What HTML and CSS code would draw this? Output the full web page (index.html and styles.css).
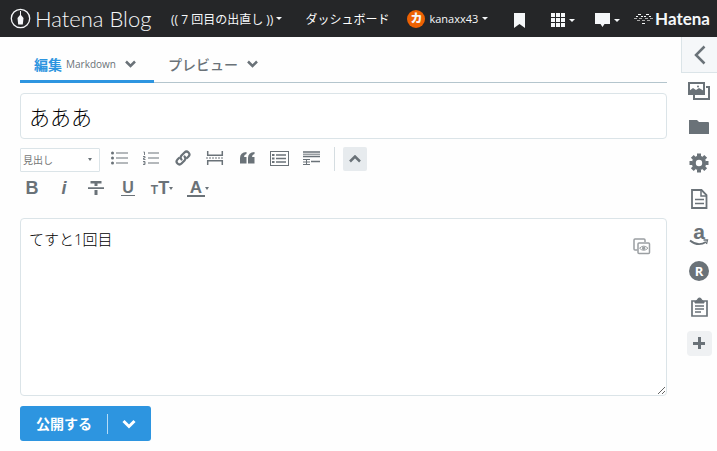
FILE: index.html
```
<!DOCTYPE html>
<html lang="ja">
<head>
    <meta charset="UTF-8">
    <meta name="viewport" content="width=device-width, initial-scale=1.0">
    <title>記事の編集 - Hatena Blog</title>
    <link rel="stylesheet" href="styles.css">
</head>
<body>
    <header class="global-header">
        <a href="#" class="blog-logo">
            <svg width="21" height="21" viewBox="0 0 21 21">
                <circle cx="10.5" cy="10.5" r="9.2" fill="none" stroke="#f5f7f9" stroke-width="1.3"/>
                <path d="M10 3h1v4l2.500 3-.7 6.500H8.200L7.500 10 10 7z" fill="#f5f7f9"/>
            </svg>
            <span>Hatena Blog</span>
        </a>
        <nav class="header-nav">
            <a href="#" class="blog-name">(( 7 回目の出直し ))<span class="caret"></span></a>
            <a href="#" class="dashboard">ダッシュボード</a>
            <a href="#" class="user"><span class="avatar">カ</span><span class="user-name">kanaxx43</span><span class="caret"></span></a>
        </nav>
        <nav class="header-icons">
            <a href="#" aria-label="ブックマーク">
                <svg width="12" height="15" viewBox="0 0 12 15"><path d="M0 0h11v15l-5.500-4L0 15z" fill="#f5f7f9"/></svg>
            </a>
            <a href="#" aria-label="サービス一覧">
                <svg width="14" height="14" viewBox="0 0 14 14"><path d="M0 0h4v4H0zM5 0h4v4H5zM10 0h4v4h-4zM0 5h4v4H0zM5 5h4v4H5zM10 5h4v4h-4zM0 10h4v4H0zM5 10h4v4H5zM10 10h4v4h-4z" fill="#f5f7f9"/></svg>
                <span class="caret"></span>
            </a>
            <a href="#" aria-label="お知らせ">
                <svg width="15" height="14" viewBox="0 0 15 14"><path d="M0 0h15v11H9.500L7.500 14l-2-3H0z" fill="#f5f7f9"/></svg>
                <span class="caret"></span>
            </a>
        </nav>
        <a href="#" class="hatena-logo">
            <svg width="19" height="12" viewBox="0 0 19 12" fill="none" stroke="#f5f7f9" stroke-width="1">
                <path d="M4 1.500h3M12 1.500h3M2 3.500h2M7 3.500h2M10 3.500h2M15 3.500h2"/>
                <path d="M0 5.500h3M5 5.500h3M11 5.500h3M16 5.500h3M3 7.500h3M8 7.500h3M13 7.500h3" stroke="#aaa"/>
                <path d="M8 10.500h3"/>
            </svg>
            <span>Hatena</span>
        </a>
    </header>

    <div class="container">
        <main class="editor">
            <div class="tabs">
                <button type="button" class="tab active">編集 <small>Markdown</small>
                    <svg width="11" height="8" viewBox="0 0 11 8"><path d="M1 1.500l4.500 4.500L10 1.500" fill="none" stroke="#6a7278" stroke-width="2.500"/></svg>
                </button>
                <button type="button" class="tab">プレビュー
                    <svg width="11" height="8" viewBox="0 0 11 8"><path d="M1 1.500l4.500 4.500L10 1.500" fill="none" stroke="#6a7278" stroke-width="2.500"/></svg>
                </button>
            </div>

            <input type="text" class="title-input" value="あああ" aria-label="タイトル">

            <div class="toolbar">
                <div class="toolbar-row">
                    <div class="heading-select">
                        <select aria-label="見出し"><option>見出し</option></select>
                        <span class="caret"></span>
                    </div>
                    <div class="tool-group">
                        <button type="button" aria-label="リスト">
                            <svg width="17" height="14" viewBox="0 0 17 14"><path d="M5 2h12M5 7h12M5 12h12" stroke="#6a7278" stroke-width="1.200"/><g fill="#6a7278"><circle cx="1.500" cy="2" r="1.500"/><circle cx="1.500" cy="7" r="1.500"/><circle cx="1.500" cy="12" r="1.500"/></g></svg>
                        </button>
                        <button type="button" aria-label="番号付きリスト">
                            <svg width="16" height="14" viewBox="0 0 16 14" fill="none" stroke="#6a7278"><path d="M5 2h11M5 7h11M5 12h11" stroke-width="1.200"/><path d="M.5 1h1v3M0 5.500h2v1.500H.5v1.500H2.500M0 10.500h2v3H0M.5 12h1.500" stroke-width=".9"/></svg>
                        </button>
                        <button type="button" aria-label="リンク">
                            <svg width="16" height="16" viewBox="0 0 16 16" fill="none" stroke="#6a7278" stroke-width="2.200" stroke-linecap="round"><path d="M6.500 9.500a3 3 0 0 1 0-4l3-3a2.800 2.800 0 0 1 4 4L12 8"/><path d="M9.500 6.500a3 3 0 0 1 0 4l-3 3a2.800 2.800 0 0 1-4-4L4 8"/></svg>
                        </button>
                        <button type="button" aria-label="続きを読む">
                            <svg width="18" height="14" viewBox="0 0 18 14" fill="none" stroke="#6a7278" stroke-width="1.500"><path d="M1.700 0v4.200h14.600V0M1.700 14V9.800h14.600V14"/><path d="M0 7h18" stroke-width="1.200" stroke-dasharray="2 1"/></svg>
                        </button>
                        <button type="button" aria-label="引用">
                            <svg width="15" height="12" viewBox="0 0 15 12" fill="#6a7278"><path d="M6.500 0v2Q4 2.500 4 5h2.500v6.500H0V6Q0 .5 6.500 0zM14.500 0v2Q12 2.500 12 5h2.500v6.500H8V6q0-5.500 6.500-6z"/></svg>
                        </button>
                        <button type="button" aria-label="目次">
                            <svg width="19" height="15" viewBox="0 0 19 15" fill="none" stroke="#6a7278"><rect x=".5" y=".5" width="18" height="14"/><path d="M6 4h10M6 7.500h10M6 11h10" stroke-width="1.400"/><path d="M2 4h2.500M2 7.500h2.500M2 11h2.500" stroke-width="2"/></svg>
                        </button>
                        <button type="button" aria-label="脚注">
                            <svg width="17" height="15" viewBox="0 0 17 15" fill="none" stroke="#6a7278"><path d="M0 1h17M0 5.500h17M8 10.500h9" stroke-width="1.400"/><path d="M0 3.200h17M0 8.500h7M0 11h7M0 13.500h7M3.500 8v6"/></svg>
                        </button>
                    </div>
                    <button type="button" class="collapse" aria-label="折りたたむ">
                        <svg width="12" height="8" viewBox="0 0 12 8"><path d="M1 6.500l5-5 5 5" fill="none" stroke="#6a7278" stroke-width="2.500"/></svg>
                    </button>
                </div>
                <div class="toolbar-row text-tools">
                    <button type="button"><b>B</b></button>
                    <button type="button"><i>i</i></button>
                    <button type="button" aria-label="打ち消し線">
                        <svg width="16" height="14" viewBox="0 0 16 14" fill="#6a7278"><path d="M2.500 0h11v2.500h-4V5h-3V2.500h-4zM6.500 9h3v5h-3zM0 6.200h16v1.800H0z"/></svg>
                    </button>
                    <button type="button"><span class="underline">U</span></button>
                    <button type="button" class="with-caret"><span class="small-t">T</span>T<span class="caret"></span></button>
                    <button type="button" class="with-caret"><span class="color-a">A</span><span class="caret"></span></button>
                </div>
            </div>

            <div class="body-wrap">
                <textarea class="body-input" aria-label="本文">てすと1回目</textarea>
                <button type="button" class="preview-button" aria-label="リアルタイムプレビュー">
                    <svg width="18" height="18" viewBox="0 0 18 18" fill="none" stroke="#9b9fa2" stroke-width="1.500"><path d="M4.500 12H2a1 1 0 0 1-1-1V2a1 1 0 0 1 1-1h9a1 1 0 0 1 1 1v2"/><rect x="5" y="5" width="11.500" height="10.500" rx="1"/><path d="M6.500 10.200q4.200-4.200 8.500 0q-4.300 4.200-8.500 0z" stroke-width="1"/><circle cx="10.700" cy="10.200" r="1" fill="#9b9fa2"/></svg>
                </button>
            </div>

            <div class="publish">
                <button type="button" class="publish-main">公開する</button>
                <button type="button" class="publish-menu" aria-label="公開オプション">
                    <svg width="14" height="10" viewBox="0 0 14 10"><path d="M1.500 2L7 7.500 12.500 2" fill="none" stroke="#fff" stroke-width="3"/></svg>
                </button>
            </div>
        </main>

        <aside class="sidebar">
            <button type="button" class="sidebar-toggle" aria-label="サイドバーを開く">
                <svg width="12" height="20" viewBox="0 0 12 20"><path d="M10.500 1.500L2 10l8.500 8.500" fill="none" stroke="#6a7278" stroke-width="2.500"/></svg>
            </button>
            <button type="button" aria-label="写真を投稿">
                <svg width="22" height="18" viewBox="0 0 22 18"><path d="M6 13v4h15V5h-3" fill="none" stroke="#6a7278" stroke-width="2"/><rect x="1" y="1" width="15" height="11" fill="#fff" stroke="#6a7278" stroke-width="2"/><path d="M1 9l4-3 3 2 3-2 5 3v3H1z" fill="#6a7278"/><circle cx="10" cy="4.500" r="1" fill="#6a7278"/></svg>
            </button>
            <button type="button" aria-label="カテゴリー">
                <svg width="20" height="14" viewBox="0 0 20 14"><path d="M0 0h8l2 2h9q1 0 1 1v11H0z" fill="#6a7278"/></svg>
            </button>
            <button type="button" aria-label="編集オプション">
                <svg width="20" height="20" viewBox="0 0 20 20" fill="none" stroke="#6a7278"><circle cx="10" cy="10" r="5.200" stroke-width="4"/><path d="M10 .5v3M10 16.500v3M.5 10h3M16.500 10h3M3.300 3.300l2 2M14.700 14.700l2 2M16.700 3.300l-2 2M5.300 14.700l-2 2" stroke-width="4"/></svg>
            </button>
            <button type="button" aria-label="下書き">
                <svg width="17" height="20" viewBox="0 0 17 20" fill="none" stroke="#6a7278" stroke-width="1.800"><path d="M1 1h9.500l5 5v13H1z"/><path d="M10 1v6h6" stroke-width="1.500"/><path d="M4 10.500h9M4 14.500h9" stroke-width="1.600"/></svg>
            </button>
            <button type="button" aria-label="Amazon商品紹介" class="amazon">
                <span>a</span>
                <svg width="20" height="7" viewBox="0 0 20 7" fill="none" stroke="#6a7278"><path d="M1 1.500q8 6.500 16 1.500" stroke-width="1.800"/><path d="M14.500 1H18.500L17.500 5" stroke-width="1.300"/></svg>
            </button>
            <button type="button" aria-label="楽天商品紹介"><span class="rakuten">R</span></button>
            <button type="button" aria-label="貼り付け">
                <svg width="17" height="20" viewBox="0 0 17 20" fill="none" stroke="#6a7278"><path d="M4 4H1v15h15V4h-3" stroke-width="1.700"/><path d="M4 6V4l2.500-1a2 2 0 0 1 4 0L13 4v2z" fill="#6a7278"/><path d="M4 9h9M4 12h9M4 15h6" stroke-width="1.300"/></svg>
            </button>
            <button type="button" aria-label="追加"><span class="plus"></span></button>
        </aside>
    </div>
</body>
</html>
```
FILE: styles.css
```
* {
    box-sizing: border-box;
}

body {
    margin: 0;
    background: #fefefe;
    color: #000;
    font-family: "Open Sans", "Noto Sans CJK JP", sans-serif;
}

button {
    margin: 0;
    padding: 0;
    border: 0;
    background: none;
    color: #6a7278;
    font-family: inherit;
    cursor: pointer;
}

svg {
    display: block;
    flex: none;
}

a {
    color: #f5f7f9;
    text-decoration: none;
}

.caret {
    display: inline-block;
    border: 3px solid transparent;
    border-top-color: currentColor;
    border-bottom: 0;
}

/* ヘッダー */
.global-header {
    display: flex;
    align-items: center;
    height: 37px;
    padding: 0 7px 0 10px;
    background: #252628;
    font-size: 12px;
    white-space: nowrap;
}

.global-header a {
    display: flex;
    align-items: center;
    gap: 4px;
}

.global-header .blog-logo {
    gap: 4px;
    width: 145px;
    font-family: Lato, sans-serif;
    font-size: 22px;
    font-weight: 300;
    line-height: 24px;
}

.header-nav {
    display: flex;
    gap: 18px;
    margin-left: 16px;
}

.global-header .blog-name {
    gap: 3px;
}

.avatar {
    width: 18px;
    height: 18px;
    border-radius: 50%;
    background: #ed6103;
    font-size: 12px;
    font-weight: 900;
    line-height: 18px;
    text-align: center;
}

.user-name {
    font-size: 11px;
}

.dashboard {
    margin-left: 5px;
    color: #fff;
}

.header-icons {
    display: flex;
    gap: 20px;
    margin-left: auto;
    padding-top: 3px;
}

.header-icons a:first-child {
    margin-right: 5px;
}

.global-header .hatena-logo {
    gap: 2px;
    margin-left: 14px;
    font-family: Lato, sans-serif;
    font-size: 17px;
    font-weight: 700;
}

/* 本体 */
.container {
    display: grid;
    grid-template-columns: 1fr 36px;
    gap: 14px;
}

.editor {
    min-width: 0;
    padding: 0 0 10px 20px;
}

.tabs {
    display: flex;
    height: 46px;
    margin-bottom: 10px;
    border-bottom: 1px solid #b4c5cd;
}

.tab {
    display: flex;
    align-items: center;
    gap: 4px;
    height: 46px;
    padding: 10px 18px 0 14px;
    border-bottom: 3px solid transparent;
    font-size: 14px;
    font-weight: 500;
}

.tab.active {
    border-bottom-color: #2d95e0;
    color: #2d95e0;
    font-weight: 700;
}

.tab small {
    color: #6a7278;
    font-size: 10px;
    font-weight: 400;
}

.tab svg {
    margin-left: 5px;
}

.title-input {
    display: block;
    width: 100%;
    height: 46px;
    padding: 0 8px;
    border: 1px solid #dbe4e8;
    border-radius: 4px;
    background: #fff;
    font-family: inherit;
    font-size: 21px;
    font-weight: 300;
}

.toolbar {
    padding: 8px 0 18px;
}

.toolbar-row {
    display: flex;
    align-items: center;
    height: 24px;
}

.toolbar button {
    display: flex;
    align-items: center;
    justify-content: center;
    width: 32px;
    height: 24px;
}

.tool-group button {
    padding-bottom: 2px;
}

.heading-select {
    position: relative;
    width: 80px;
    height: 24px;
}

.heading-select select {
    width: 100%;
    height: 100%;
    padding: 0 2px;
    border: 1px solid #dbe4e8;
    border-radius: 1px;
    background: #fff;
    color: #777;
    font-family: inherit;
    font-size: 10px;
    appearance: none;
}

.heading-select .caret {
    position: absolute;
    top: 11px;
    right: 8px;
    border-width: 3px 2px 0;
    color: #6a7278;
}

.tool-group {
    display: flex;
    margin-left: 3px;
    padding-right: 7px;
    border-right: 1px solid #d5dde1;
}

.toolbar .collapse {
    width: 24px;
    margin-left: 8px;
    border-radius: 2px;
    background: #e7ebee;
}

.text-tools {
    margin: 5px 0 0 -4px;
    font-family: "Liberation Sans", sans-serif;
}

.text-tools button {
    font-family: inherit;
    font-size: 18px;
    font-weight: 700;
    line-height: 16px;
}

.underline {
    padding: 0 1px;
    border-bottom: 1px solid #6a7278;
    font-size: 16px;
    line-height: 14px;
}

.toolbar .with-caret {
    width: 36px;
}

.with-caret .caret {
    border-width: 3px 2px 0;
}

.small-t {
    padding-top: 4px;
    font-size: 12px;
}

.color-a {
    padding: 0 3px;
    border-bottom: 2px solid #6a7278;
    font-size: 17px;
    line-height: 15px;
}

.body-wrap {
    position: relative;
}

.body-input {
    display: block;
    width: 100%;
    height: 178px;
    padding: 8px;
    border: 1px solid #dbe4e8;
    border-radius: 4px;
    background: #fff;
    font-family: inherit;
    font-size: 15px;
    font-weight: 300;
    line-height: 24px;
    resize: vertical;
}

.preview-button {
    position: absolute;
    top: 20px;
    right: 16px;
}

.publish {
    display: inline-flex;
    align-items: center;
    height: 35px;
    margin-top: 10px;
    border-radius: 3px;
    background: #2d95e0;
}

.publish button {
    color: #fff;
    font-size: 14px;
    font-weight: 700;
    line-height: 20px;
}

.publish-main {
    padding: 0 15px 0 16px;
    border-right: 1px solid #b5dcf7;
}

.publish .publish-menu {
    padding: 0 15px 0 14px;
}

/* サイドバー */
.sidebar {
    display: flex;
    flex-direction: column;
}

.sidebar button {
    display: flex;
    align-items: center;
    justify-content: center;
    height: 36px;
}

.sidebar .sidebar-toggle {
    border: 1px solid #dbe4e8;
    border-width: 0 0 1px 1px;
    background: #f5f7f9;
}

.sidebar .amazon {
    flex-direction: column;
}

.amazon span {
    font-family: "Liberation Sans", sans-serif;
    font-size: 21px;
    font-weight: 700;
    line-height: 14px;
}

.rakuten {
    width: 20px;
    height: 20px;
    border-radius: 50%;
    background: #6a7278;
    color: #fff;
    font-size: 13px;
    font-weight: 700;
    line-height: 20px;
}

.plus {
    width: 25px;
    height: 25px;
    border-radius: 4px;
    background:
        linear-gradient(#6a7278, #6a7278) center / 12px 3px no-repeat,
        linear-gradient(#6a7278, #6a7278) center / 3px 12px no-repeat,
        #eff1f3;
}
```
